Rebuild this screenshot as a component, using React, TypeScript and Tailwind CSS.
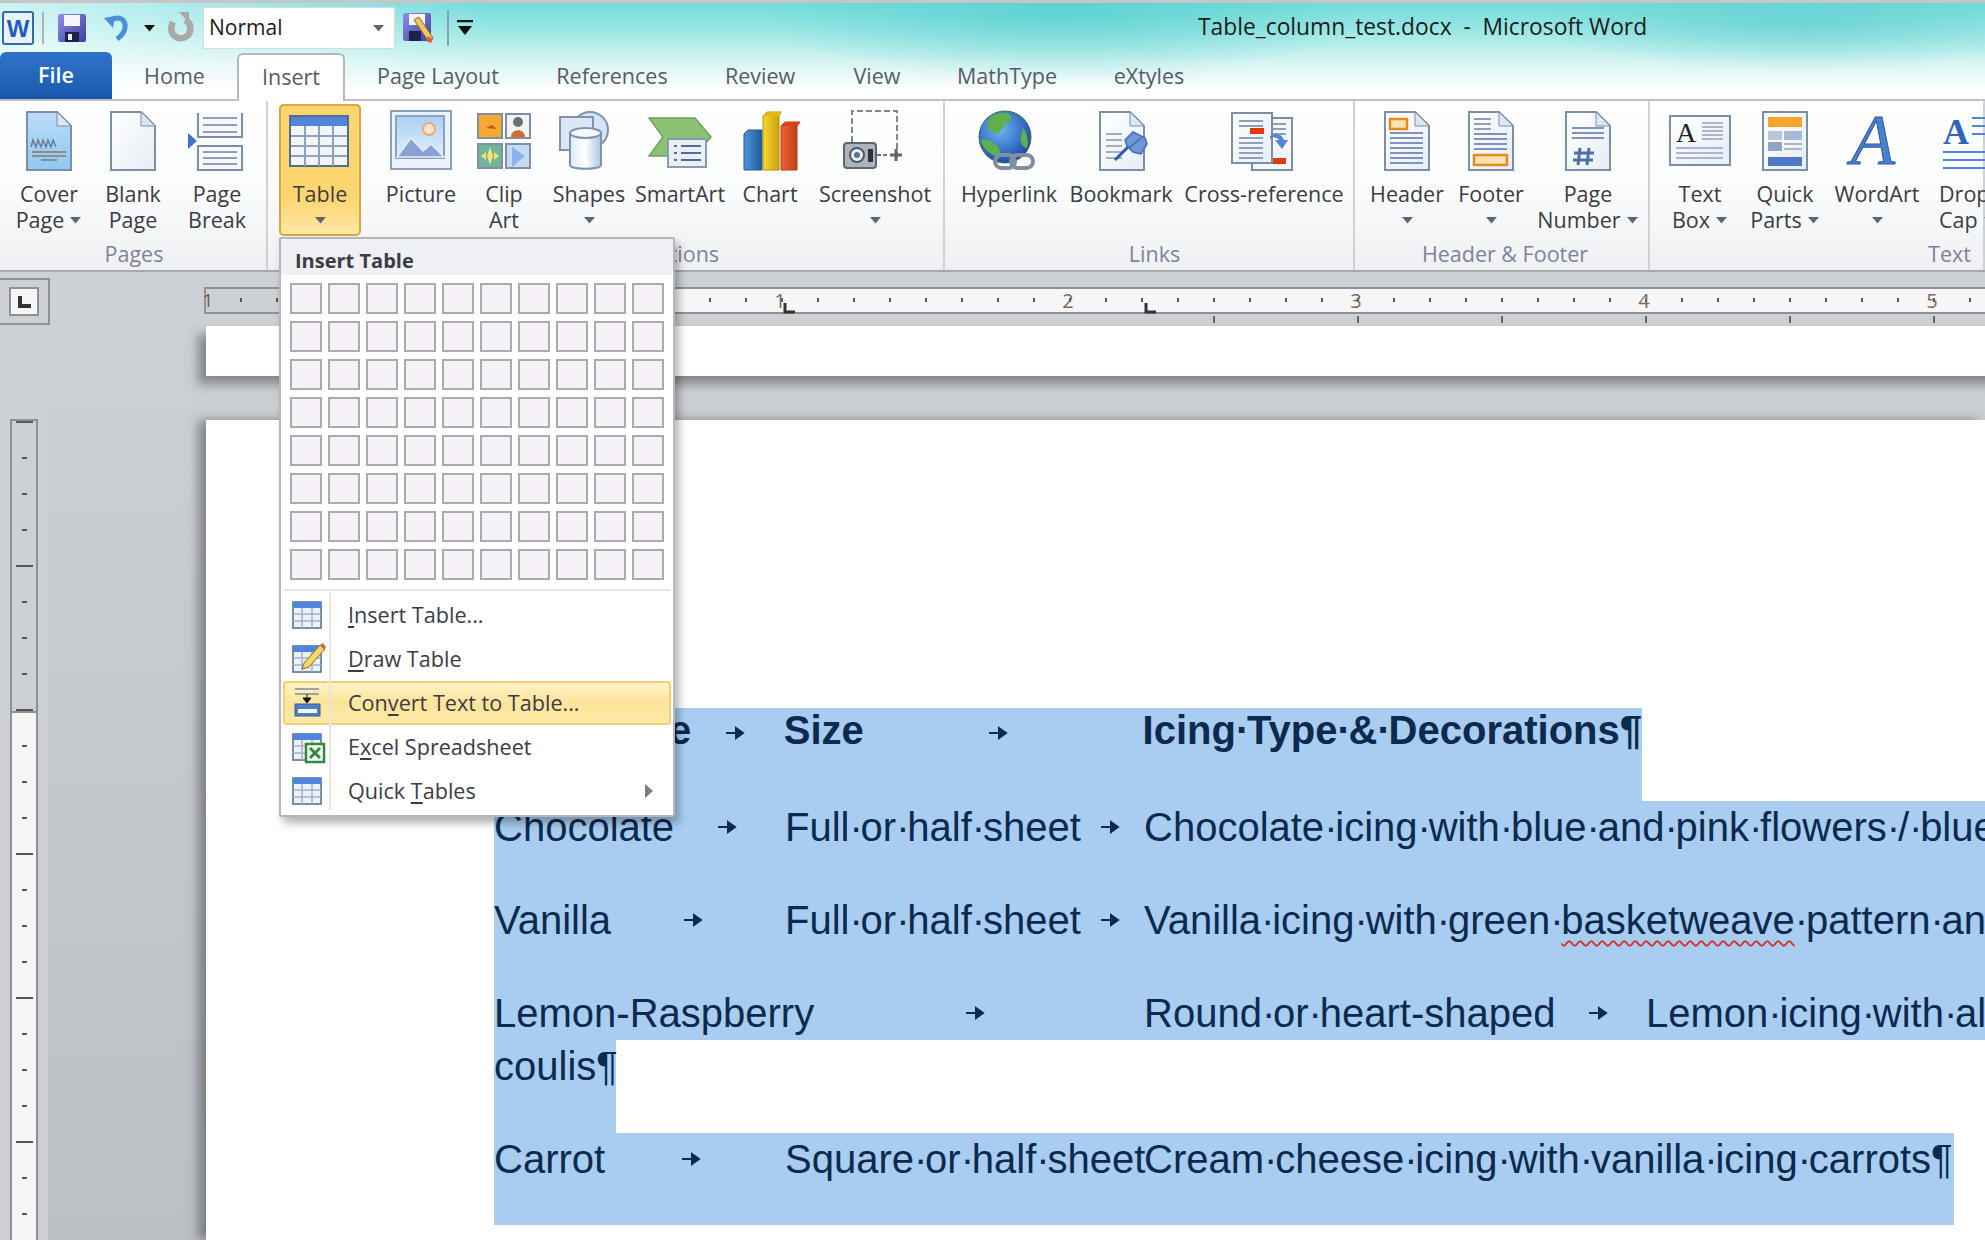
import React from 'react';

const Caret = ({ className = '' }: { className?: string }) => (
  <svg width="13" height="8" viewBox="0 0 13 8" className={`inline-block ${className}`}>
    <path d="M1 1h11L6.5 7.5z" fill="#5f6670" />
  </svg>
);

const Defs = () => (
  <svg className="absolute h-0 w-0">
    <defs>
      <linearGradient id="docW" x1="0" y1="0" x2="1" y2="1">
        <stop offset="0" stopColor="#ffffff" />
        <stop offset="1" stopColor="#e6edf6" />
      </linearGradient>
      <linearGradient id="docB" x1="0" y1="0" x2="0" y2="1">
        <stop offset="0" stopColor="#bcdcf6" />
        <stop offset="1" stopColor="#8fc8f2" />
      </linearGradient>
      <linearGradient id="sky" x1="0" y1="0" x2="0" y2="1">
        <stop offset="0" stopColor="#a9d0f4" />
        <stop offset="1" stopColor="#e4effa" />
      </linearGradient>
      <linearGradient id="cyl" x1="0" y1="0" x2="1" y2="0">
        <stop offset="0" stopColor="#dcebfa" />
        <stop offset="0.5" stopColor="#ffffff" />
        <stop offset="1" stopColor="#a9c6e6" />
      </linearGradient>
      <linearGradient id="save" x1="0" y1="0" x2="1" y2="1">
        <stop offset="0" stopColor="#8f8fe8" />
        <stop offset="1" stopColor="#3c3f9e" />
      </linearGradient>
      <radialGradient id="globe" cx="0.4" cy="0.35" r="0.7">
        <stop offset="0" stopColor="#6fb6f5" />
        <stop offset="1" stopColor="#1547a8" />
      </radialGradient>
      <linearGradient id="barB" x1="0" y1="0" x2="1" y2="0">
        <stop offset="0" stopColor="#4f94d8" />
        <stop offset="1" stopColor="#1f5b9c" />
      </linearGradient>
      <linearGradient id="barY" x1="0" y1="0" x2="1" y2="0">
        <stop offset="0" stopColor="#f8d92e" />
        <stop offset="1" stopColor="#c49a0c" />
      </linearGradient>
      <linearGradient id="barR" x1="0" y1="0" x2="1" y2="0">
        <stop offset="0" stopColor="#ee6236" />
        <stop offset="1" stopColor="#b83a16" />
      </linearGradient>
    </defs>
  </svg>
);

const Doc = ({ fill = 'url(#docW)', x = 10 }: { fill?: string; x?: number }) => (
  <g transform={`translate(${x} 0)`}>
    <path d="M0 4h30l14 14v44H0z" fill={fill} stroke="#7b8fa8" strokeWidth="2" />
    <path d="M30 4v14h14z" fill="#dde6f2" stroke="#7b8fa8" strokeWidth="1" />
  </g>
);

const Lines = ({ x, y, w, n, step = 5, color = '#7e93c0' }: { x: number; y: number; w: number; n: number; step?: number; color?: string }) => (
  <g stroke={color} strokeWidth="2">
    {Array.from({ length: n }).map((_, i) => (
      <path key={i} d={`M${x} ${y + i * step}h${w}`} />
    ))}
  </g>
);

const Icon = ({ children, w = 64 }: { children: React.ReactNode; w?: number }) => (
  <svg width={w} height="64" viewBox={`0 0 ${w} 64`} className="mt-[4px] shrink-0 overflow-visible">
    {children}
  </svg>
);

const TableGlyph = () => (
  <g>
    <rect x="2" y="8" width="58" height="50" fill="#f2f5fa" stroke="#566c90" strokeWidth="2" />
    <rect x="3" y="9" width="56" height="9" fill="#4f86dc" />
    <g stroke="#8fa2bd" strokeWidth="2">
      <path d="M3 28h56M3 38h56M3 48h56M17 18v40M31 18v40M45 18v40" />
    </g>
  </g>
);

const icons: Record<string, React.ReactNode> = {
  cover: (
    <Icon>
      <Doc fill="url(#docB)" />
      <path d="M14 39l2-7 3 7 2-7 3 7 2-7 3 7 2-7 3 7 2-7 3 7" fill="none" stroke="#6b7d92" strokeWidth="1.5" />
      <Lines x={15} y={44} w={34} n={2} step={4} color="#8c8c8c" />
      <path d="M24 52h16" stroke="#8c8c8c" strokeWidth="2" />
    </Icon>
  ),
  blank: (
    <Icon>
      <Doc />
    </Icon>
  ),
  pagebreak: (
    <Icon>
      <path d="M13 5v24h44V5" fill="#f7f9fc" stroke="#7b8fa8" strokeWidth="2" />
      <Lines x={18} y={10} w={34} n={3} step={7} color="#8ea0bd" />
      <rect x="13" y="38" width="44" height="24" fill="#f7f9fc" stroke="#7b8fa8" strokeWidth="2" />
      <Lines x={18} y={44} w={34} n={3} step={6} color="#8ea0bd" />
      <path d="M3 25l9 8-9 8z" fill="#3e72c8" />
    </Icon>
  ),
  table: (
    <Icon>
      <TableGlyph />
    </Icon>
  ),
  picture: (
    <Icon>
      <rect x="2" y="3" width="60" height="58" fill="#eaf3fb" stroke="#8ba0bb" strokeWidth="2" />
      <rect x="7" y="8" width="48" height="42" fill="url(#sky)" stroke="#8ba0bb" strokeWidth="2" />
      <circle cx="40" cy="21" r="6" fill="#fde3cc" stroke="#f3a873" strokeWidth="2" />
      <path d="M8 49l14-19 12 13 8-7 13 13z" fill="#8aa0d6" stroke="#e8eef8" strokeWidth="1.5" />
    </Icon>
  ),
  clipart: (
    <Icon>
      <rect x="6" y="6" width="24" height="24" fill="#f7a92f" stroke="#7f8fa5" strokeWidth="2" />
      <path d="M14 20l6-3 5 4z" fill="#c9541d" />
      <rect x="34" y="6" width="24" height="24" fill="#f2f4f7" stroke="#7f8fa5" strokeWidth="2" />
      <circle cx="46" cy="14" r="5" fill="#6f6f6f" />
      <path d="M39 29c0-9 14-9 14 0z" fill="#d9682a" />
      <rect x="6" y="36" width="24" height="24" fill="#6fb59a" stroke="#7f8fa5" strokeWidth="2" />
      <path d="M18 39l3 9-3 9-3-9zM9 48l5-4v8zM27 48l-5-4v8z" fill="#f5e36e" />
      <rect x="34" y="36" width="24" height="24" fill="#c5daf6" stroke="#7f8fa5" strokeWidth="2" />
      <path d="M40 39l13 9-13 11z" fill="#8ab4ec" />
    </Icon>
  ),
  shapes: (
    <Icon>
      <circle cx="33" cy="22" r="18" fill="#d6e4f6" stroke="#7f93ad" strokeWidth="2" />
      <rect x="3" y="9" width="33" height="33" fill="#dbe7f7" stroke="#7f93ad" strokeWidth="2" />
      <path d="M13 25v32c0 5 31 5 31 0V25z" fill="url(#cyl)" stroke="#7f93ad" strokeWidth="2" />
      <ellipse cx="28.5" cy="25" rx="15.5" ry="5" fill="#f4f8fd" stroke="#7f93ad" strokeWidth="2" />
    </Icon>
  ),
  smartart: (
    <Icon>
      <path d="M1 10h46l16 19-16 19H1l14-19z" fill="#8dc274" stroke="#6ea45a" strokeWidth="1.5" />
      <rect x="20" y="31" width="38" height="28" fill="#e9eff5" stroke="#8a9bb0" strokeWidth="2" />
      <path d="M26 38h3M33 38h20M26 45h3M33 45h20M26 52h3M33 52h20" stroke="#4f6b9a" strokeWidth="2" />
    </Icon>
  ),
  chart: (
    <Icon>
      <path d="M6 26l4-4h14v40H6z" fill="url(#barB)" stroke="#1f5b9c" />
      <path d="M25 8l4-4h14l-2 4v54H25z" fill="url(#barY)" stroke="#b58d0a" />
      <path d="M25 8l4-4h14l-2 4z" fill="#e3b90f" />
      <path d="M43 18l4-4h15l-3 4v44H43z" fill="url(#barR)" stroke="#b23a18" />
      <path d="M43 18l4-4h15l-3 4z" fill="#d8431c" />
    </Icon>
  ),
  screenshot: (
    <Icon>
      <path d="M9 34V3h45v48" fill="none" stroke="#7c8694" strokeWidth="2" strokeDasharray="6 3" />
      <rect x="1" y="35" width="32" height="25" rx="3" fill="#aeb4bb" stroke="#5e6670" strokeWidth="2" />
      <circle cx="14" cy="47" r="7" fill="#e8edf2" stroke="#4f5863" strokeWidth="2" />
      <circle cx="14" cy="47" r="3" fill="#4f76a8" />
      <rect x="25" y="41" width="5" height="13" fill="#2d3238" />
      <path d="M34 47h10" stroke="#6b7480" strokeWidth="2" strokeDasharray="4 2" />
      <path d="M47 47h12M53 41v12" stroke="#5e6670" strokeWidth="3" />
    </Icon>
  ),
  hyperlink: (
    <Icon>
      <circle cx="28" cy="29" r="26" fill="url(#globe)" stroke="#3b6a4d" strokeWidth="1" />
      <path d="M14 9c8-6 18-5 20 0s-6 6-8 10-6 8-10 6-8-10-2-16zM4 32c6-2 12 2 16 6s4 10 0 10-14-6-16-16zM46 20c4 4 6 14 4 20-4 0-8-6-6-12z" fill="#5fb04a" />
      <g fill="none" stroke="#7f8ea0" strokeWidth="4">
        <rect x="18" y="47" width="20" height="13" rx="6.5" fill="none" />
        <rect x="34" y="47" width="22" height="13" rx="6.5" fill="none" />
      </g>
    </Icon>
  ),
  bookmark: (
    <Icon>
      <Doc x={11} />
      <Lines x={17} y={26} w={16} n={5} step={6} color="#a5aebb" />
      <path d="M26 52l14-14" stroke="#2b5aa8" strokeWidth="3" />
      <path d="M36 32l8-8 12 6 2 6-6 10-8-2-6-6z" fill="#6f97d6" stroke="#3e6db5" strokeWidth="1.5" />
      <path d="M40 40l12-10" stroke="#3e6db5" strokeWidth="1.5" />
    </Icon>
  ),
  crossref: (
    <Icon>
      <rect x="20" y="10" width="40" height="52" fill="#f4f7fb" stroke="#7b8fa8" strokeWidth="2" />
      <Lines x={40} y={16} w={14} n={3} step={5} color="#8ea0bd" />
      <rect x="40" y="50" width="14" height="6" fill="#e03a0d" />
      <rect x="0" y="5" width="40" height="50" fill="url(#docW)" stroke="#7b8fa8" strokeWidth="2" />
      <Lines x={7} y={13} w={24} n={2} step={5} color="#8ea0bd" />
      <rect x="18" y="20" width="14" height="6" fill="#e03a0d" />
      <Lines x={7} y={30} w={24} n={5} step={5} color="#8ea0bd" />
      <path d="M38 28c6-4 12-2 14 4l4 0-6 9-7-9h4c-2-3-6-3-9-1z" fill="#4f86dc" />
    </Icon>
  ),
  header: (
    <Icon>
      <Doc />
      <rect x="15" y="11" width="17" height="10" fill="#fbe2b0" stroke="#e58a1f" strokeWidth="2.5" />
      <Lines x={15} y={25} w={33} n={7} step={5} />
    </Icon>
  ),
  footer: (
    <Icon>
      <Doc />
      <Lines x={15} y={11} w={17} n={3} step={5} color="#8ea0bd" />
      <Lines x={15} y={26} w={33} n={4} step={5} />
      <rect x="15" y="47" width="33" height="10" fill="#fbe2b0" stroke="#e58a1f" strokeWidth="2.5" />
    </Icon>
  ),
  pagenumber: (
    <Icon>
      <Doc />
      <Lines x={16} y={20} w={32} n={3} step={5} />
      <path d="M24 40l-2 17M33 40l-2 17M18 45h20M17 52h20" stroke="#4f6fa8" strokeWidth="3" fill="none" />
    </Icon>
  ),
  textbox: (
    <Icon>
      <rect x="2" y="8" width="60" height="49" fill="url(#docW)" stroke="#7b8fa8" strokeWidth="2" />
      <text x="8" y="34" fontFamily="'Liberation Serif', serif" fontSize="28" fill="#222">A</text>
      <Lines x={34} y={15} w={21} n={5} step={4} color="#aab6cc" />
      <Lines x={8} y={40} w={47} n={3} step={5} color="#aab6cc" />
    </Icon>
  ),
  quickparts: (
    <Icon>
      <rect x="10" y="4" width="44" height="58" fill="url(#docW)" stroke="#7b8fa8" strokeWidth="2" />
      <rect x="15" y="9" width="34" height="10" fill="#f8a52c" />
      <rect x="15" y="23" width="14" height="9" fill="#b9c6da" />
      <rect x="31" y="23" width="18" height="9" fill="#a8b9d8" />
      <rect x="15" y="34" width="14" height="9" fill="#8fa4c4" />
      <Lines x={31} y={36} w={18} n={2} step={5} color="#aab6cc" />
      <rect x="15" y="49" width="34" height="9" fill="#4f78c8" />
    </Icon>
  ),
  wordart: (
    <Icon>
      <text x="6" y="56" fontFamily="'Liberation Serif', serif" fontStyle="italic" fontSize="72" fill="#4a7fd0" stroke="#2b5aa8" strokeWidth="1">A</text>
    </Icon>
  ),
  dropcap: (
    <Icon>
      <text x="4" y="36" fontFamily="'Liberation Serif', serif" fontWeight="700" fontSize="36" fill="#2f63bd">A</text>
      <Lines x={33} y={10} w={31} n={3} step={8} color="#4f86dc" />
      <Lines x={4} y={44} w={60} n={3} step={8} color="#4f86dc" />
    </Icon>
  ),
};

const RibbonButton = ({
  icon,
  top,
  bottom = '',
  caret = false,
  className = '',
}: {
  icon: string;
  top: string;
  bottom?: string;
  caret?: boolean;
  className?: string;
}) => (
  <div className={`flex h-[132px] shrink-0 flex-col items-center ${className}`}>
    {icons[icon]}
    <div className="mt-[9px] h-[26px] whitespace-nowrap leading-[26px]">{top}</div>
    <div className="flex h-[26px] items-center gap-[5px] whitespace-nowrap leading-[26px]">
      {bottom}
      {caret && <Caret />}
    </div>
  </div>
);

const Group = ({
  label,
  children,
  className = '',
  labelClass = '',
}: {
  label: string;
  children: React.ReactNode;
  className?: string;
  labelClass?: string;
}) => (
  <div className={`flex h-full shrink-0 flex-col border-r-2 border-[#ced1d6] pt-[3px] ${className}`}>
    <div className="flex h-[132px]">{children}</div>
    <div className={`mt-[4px] h-[28px] whitespace-nowrap text-center leading-[28px] text-[#7f829c] ${labelClass}`}>{label}</div>
  </div>
);

const Underlined = ({ c }: { c: string }) => <span className="underline underline-offset-[3px]">{c}</span>;

const MenuItem = ({
  children,
  icon,
  active = false,
  arrow = false,
}: {
  children: React.ReactNode;
  icon: React.ReactNode;
  active?: boolean;
  arrow?: boolean;
}) => (
  <div
    className={`flex h-[44px] items-center rounded-[4px] ${
      active ? 'border-2 border-[#f3cf6f] bg-[linear-gradient(#fff3c8,#fde49a_50%,#fdeaa8)]' : 'border-2 border-transparent'
    }`}
  >
    <svg width="40" height="36" viewBox="0 0 40 36" className="ml-[1px] shrink-0">
      {icon}
    </svg>
    <div className="ml-[22px] flex-1 whitespace-nowrap">{children}</div>
    {arrow && (
      <svg width="8" height="14" viewBox="0 0 8 14" className="mr-[16px]">
        <path d="M0 0l8 7-8 7z" fill="#7d7d7d" />
      </svg>
    )}
  </div>
);

const MiniTable = () => (
  <g>
    <rect x="7" y="5" width="28" height="26" fill="#eef2f8" stroke="#4f6a90" strokeWidth="1.5" />
    <rect x="7" y="5" width="28" height="6" fill="#4f86dc" />
    <path d="M7 17h28M7 24h28M16 11v20M26 11v20" stroke="#a3b3ca" strokeWidth="1.5" />
  </g>
);

const InsertTableMenu = () => (
  <div className="absolute left-[279px] top-[237px] z-20 h-[580px] w-[396px] rounded-[2px] border-2 border-[#b4b7bb] bg-white text-[21.6px] text-[#3c3c46] shadow-[4px_6px_8px_rgba(0,0,0,0.3)]">
    <div className="h-[36px] bg-[#eef0f3] pl-[14px] text-[20px] font-bold leading-[43px]">Insert Table</div>
    <div className="mt-[8px] grid grid-cols-[repeat(10,32px)] gap-x-[6px] gap-y-[7px] pl-[9px]">
      {Array.from({ length: 80 }).map((_, i) => (
        <div key={i} className="h-[31px] border-2 border-[#a9abaf] bg-[#f6f2f7]" />
      ))}
    </div>
    <div className="mx-[3px] mt-[9px] h-[2px] bg-[#e4e6e9]" />
    <div className="relative px-[2px] pt-[2px]">
      <div className="absolute bottom-[3px] left-[48px] top-[1px] w-[2px] bg-[#e4e6e9]" />
      <MenuItem icon={<MiniTable />}>
        <Underlined c="I" />nsert Table...
      </MenuItem>
      <MenuItem
        icon={
          <g>
            <MiniTable />
            <path d="M18 22l16-18 5 4-16 18-7 2z" fill="#f6d66c" stroke="#8a6d1e" strokeWidth="1" />
            <path d="M34 4l3-2 3 4-2 3z" fill="#d9614a" />
          </g>
        }
      >
        <Underlined c="D" />raw Table
      </MenuItem>
      <MenuItem
        active
        icon={
          <g>
            <path d="M9 4h24M9 9h24" stroke="#7d8ca3" strokeWidth="1.5" />
            <path d="M21 9v7M17 13l4 5 4-5z" stroke="#111" fill="#111" strokeWidth="1" />
            <rect x="9" y="19" width="25" height="12" fill="#4f7fc4" stroke="#3f5f90" />
            <rect x="12" y="24" width="19" height="4" fill="#f5f6f8" />
          </g>
        }
      >
        Con<Underlined c="v" />ert Text to Table...
      </MenuItem>
      <MenuItem
        icon={
          <g>
            <MiniTable />
            <rect x="20" y="15" width="18" height="18" fill="#fff" stroke="#2e8b3c" strokeWidth="2.5" />
            <path d="M24 19l10 10M34 19L24 29" stroke="#2e8b3c" strokeWidth="3" />
          </g>
        }
      >
        E<Underlined c="x" />cel Spreadsheet
      </MenuItem>
      <MenuItem icon={<MiniTable />} arrow>
        Quick <Underlined c="T" />ables
      </MenuItem>
    </div>
  </div>
);

const HorizontalRuler = () => {
  const minors = [240, 276];
  const white: number[] = [];
  for (let x = 673; x < 1985; x += 36) {
    if ((x - 492) % 288 !== 0) white.push(x);
  }
  return (
    <svg width="1781" height="56" viewBox="204 270 1781 56" className="shrink-0">
      <rect x="205" y="288" width="288" height="25" fill="#cdd0d4" stroke="#8d9298" strokeWidth="2" />
      <rect x="493" y="288" width="1500" height="25" fill="#f6f6f6" stroke="#8d9298" strokeWidth="2" />
      <text x="208" y="307" fontSize="19" textAnchor="middle" fill="#6d5a4a" fontFamily="'Open Sans', sans-serif">1</text>
      {minors.map((x) => (
        <rect key={x} x={x} y="298" width="2" height="4" fill="#555" />
      ))}
      {white.map((x) => {
        const major = (x - 492) % 144 === 0;
        return <rect key={x} x={x} y={major ? 294 : 298} width="2" height={major ? 12 : 4} fill="#555" />;
      })}
      {[1, 2, 3, 4, 5].map((n) => (
        <text key={n} x={492 + n * 288} y="308" fontSize="20" textAnchor="middle" fill="#7d6a5c" fontFamily="'Open Sans', sans-serif">
          {n}
        </text>
      ))}
      {[785, 1146].map((x) => (
        <path key={x} d={`M${x} 303v9h10`} fill="none" stroke="#333" strokeWidth="3" />
      ))}
      {[1213, 1357, 1501, 1645, 1789, 1933].map((x) => (
        <rect key={x} x={x} y="316" width="2" height="7" fill="#666" />
      ))}
    </svg>
  );
};

const VerticalRuler = () => {
  const ticks: number[] = [];
  for (let y = 421; y < 1240; y += 36) ticks.push(y);
  return (
    <svg width="206" height="914" viewBox="0 326 206 914" className="shrink-0">
      <rect x="0" y="326" width="48" height="914" fill="#cdd0d4" />
      <rect x="11" y="420" width="26" height="292" fill="#cdd0d4" stroke="#8d9298" strokeWidth="2" />
      <rect x="11" y="712" width="26" height="540" fill="#f6f6f6" stroke="#8d9298" strokeWidth="2" />
      {ticks.map((y) => {
        const major = (y - 421) % 144 === 0;
        return <rect key={y} x={major ? 16 : 22} y={y} width={major ? 17 : 5} height="2" fill="#555" />;
      })}
    </svg>
  );
};

const TabMark = ({ className = '' }: { className?: string }) => (
  <svg width="20" height="14" viewBox="0 0 20 14" className={`shrink-0 ${className}`}>
    <path d="M1 7h13M11 2L18 7l-7 5z" stroke="#0b2a4e" strokeWidth="2" fill="#0b2a4e" />
  </svg>
);

// word's formatting dot sits in a space, which is narrower than the glyph
const Dotted = ({ s }: { s: string }) => (
  <>
    {s.split('·').map((part, i) => (
      <React.Fragment key={i}>
        {i > 0 && <span className="tracking-[-0.055em]">·</span>}
        {part}
      </React.Fragment>
    ))}
  </>
);

export default function App() {
  return (
    <div className="relative flex h-[1240px] w-[1985px] flex-col overflow-hidden bg-[#cdd0d4] font-['Open_Sans',sans-serif] text-[21.5px] text-[#3c3c46]">
      <Defs />

      {/* window chrome */}
      <div className="h-[99px] shrink-0 border-t-[3px] border-[#c6c6c6] bg-[radial-gradient(ellipse_300px_70px_at_1060px_10px,rgba(70,200,200,0.55),transparent),radial-gradient(ellipse_260px_50px_at_1800px_20px,rgba(70,195,195,0.45),transparent),linear-gradient(90deg,rgba(255,255,255,0.65),rgba(255,255,255,0)_25%),linear-gradient(#72dcdc,#9ce8e5_30%,#d8f5f3_62%,#ffffff_92%)]">
        <div className="flex h-[49px] items-center">
          <div className="flex w-[1198px] shrink-0 items-center">
            <svg width="32" height="34" viewBox="0 0 32 34" className="ml-[2px] shrink-0">
              <rect x="1" y="1" width="30" height="32" rx="2" fill="#e9f3fc" stroke="#2f6ab5" strokeWidth="2" />
              <text x="16" y="26" textAnchor="middle" fontSize="24" fontWeight="700" fill="#1b5fbf" fontFamily="'Liberation Sans', sans-serif">W</text>
            </svg>
            <div className="ml-[8px] h-[32px] w-[2px] bg-[#a9b4b8]" />
            <svg width="30" height="30" viewBox="0 0 30 30" className="ml-[13px] shrink-0">
              <rect x="1" y="1" width="28" height="28" rx="2" fill="url(#save)" />
              <rect x="7" y="2" width="16" height="11" fill="#f5f5fb" />
              <rect x="8" y="19" width="14" height="10" fill="#1f2050" />
              <rect x="11" y="21" width="4" height="6" fill="#f0f0f0" />
            </svg>
            <svg width="30" height="32" viewBox="0 0 30 32" className="ml-[15px] shrink-0">
              <path d="M9 8c9-5 15 0 14 8-1 6-5 9-8 11" fill="none" stroke="#4a8fd8" strokeWidth="5" />
              <path d="M2 6l11-2-2 12z" fill="#4a8fd8" />
            </svg>
            <Caret className="ml-[11px] [&>path]:fill-[#111]" />
            <svg width="28" height="32" viewBox="0 0 28 32" className="ml-[11px] shrink-0">
              <path d="M6 10c-3 6-2 12 3 15 6 3 13 0 14-6 1-5-1-9-5-11" fill="none" stroke="#a8aaa8" strokeWidth="6.5" />
              <path d="M12 0h10v11z" fill="#a8aaa8" />
            </svg>
            <div className="ml-[8px] flex h-[42px] w-[192px] items-center justify-between border border-[#d5dddf] bg-white pl-[5px] pr-[9px] text-[21px] text-[#1c1c1c]">
              Normal
              <Caret />
            </div>
            <svg width="32" height="32" viewBox="0 0 32 32" className="ml-[7px] shrink-0">
              <rect x="1" y="1" width="28" height="28" rx="2" fill="url(#save)" />
              <rect x="7" y="2" width="16" height="11" fill="#f5f5fb" />
              <rect x="7" y="19" width="12" height="10" fill="#1f2050" />
              <path d="M12 8l5-3 14 21-4 4z" fill="#eec85e" stroke="#8a6d1e" />
              <path d="M26 24l5 3-2 4-5-2z" fill="#d9614a" />
            </svg>
            <div className="ml-[13px] h-[36px] w-[2px] bg-[#87a3a6]" />
            <svg width="18" height="16" viewBox="0 0 18 16" className="ml-[7px] shrink-0">
              <path d="M1 1h16" stroke="#111" strokeWidth="2.5" />
              <path d="M2 6h14l-7 9z" fill="#111" />
            </svg>
          </div>
          <div className="whitespace-nowrap text-[22.8px] text-[#1c1c1c]">Table_column_test.docx&nbsp; -&nbsp; Microsoft Word</div>
        </div>

        <div className="flex h-[47px] items-end text-center leading-[46px] text-[#575c66]">
          <div className="h-[47px] w-[112px] rounded-t-[6px] bg-[linear-gradient(#2f74c9,#1a58ac)] font-semibold text-white">File</div>
          <div className="w-[125px]">Home</div>
          <div className="z-10 -mb-[2px] h-[48px] w-[108px] rounded-t-[6px] border-2 border-b-0 border-[#b5b8bc] bg-white leading-[44px]">Insert</div>
          <div className="w-[186px]">Page Layout</div>
          <div className="w-[162px]">References</div>
          <div className="w-[134px]">Review</div>
          <div className="w-[100px]">View</div>
          <div className="w-[160px]">MathType</div>
          <div className="w-[124px]">eXtyles</div>
        </div>
      </div>

      {/* ribbon */}
      <div className="flex h-[171px] shrink-0 overflow-hidden border-t-2 border-[#bcbfc3] bg-[linear-gradient(#ffffff,#fafbfb_55%,#eef0f3)] text-[#3c3c46]">
        <Group label="Pages" labelClass="pr-[5px]" className="w-[268px] pl-[7px]">
          <RibbonButton icon="cover" top="Cover" bottom="Page" caret className="w-[84px]" />
          <RibbonButton icon="blank" top="Blank" bottom="Page" className="w-[84px]" />
          <RibbonButton icon="pagebreak" top="Page" bottom="Break" className="w-[84px]" />
        </Group>
        <Group label="Illustrations" labelClass="pl-[98px]" className="w-[677px] pl-[11px]">
          <RibbonButton icon="table" top="Table" caret className="w-[82px] rounded-[5px] bg-[linear-gradient(#fdd56f,#fdd56f_70%,#fee9a6)] shadow-[inset_0_0_0_2px_#d9a63f]" />
          <RibbonButton icon="picture" top="Picture" className="ml-[17px] w-[86px]" />
          <RibbonButton icon="clipart" top="Clip" bottom="Art" className="ml-[10px] w-[60px]" />
          <RibbonButton icon="shapes" top="Shapes" caret className="ml-[15px] w-[80px]" />
          <RibbonButton icon="smartart" top="SmartArt" className="ml-[6px] w-[90px]" />
          <RibbonButton icon="chart" top="Chart" className="ml-[10px] w-[70px]" />
          <RibbonButton icon="screenshot" top="Screenshot" caret className="ml-[8px] w-[124px]" />
        </Group>
        <Group label="Links" className="w-[410px] pl-[11px]">
          <RibbonButton icon="hyperlink" top="Hyperlink" className="ml-[-5px] w-[116px]" />
          <RibbonButton icon="bookmark" top="Bookmark" className="ml-[2px] w-[104px]" />
          <RibbonButton icon="crossref" top="Cross-reference" className="ml-[3px] w-[176px]" />
        </Group>
        <Group label="Header & Footer" labelClass="pr-[3px]" className="w-[295px] pl-[10px]">
          <RibbonButton icon="header" top="Header" caret className="w-[84px]" />
          <RibbonButton icon="footer" top="Footer" caret className="w-[84px]" />
          <RibbonButton icon="pagenumber" top="Page" bottom="Number" caret className="ml-[4px] w-[102px]" />
        </Group>
        <Group label="Text" labelClass="pl-[252px]" className="w-[335px] border-r-0 pl-[14px]">
          <RibbonButton icon="textbox" top="Text" bottom="Box" caret className="w-[72px]" />
          <RibbonButton icon="quickparts" top="Quick" bottom="Parts" caret className="ml-[7px] w-[84px]" />
          <RibbonButton icon="wordart" top="WordArt" caret className="ml-[5px] w-[90px]" />
          <RibbonButton icon="dropcap" top="Drop" bottom="Cap" caret className="ml-[7px] w-[64px] items-start pl-[10px]" />
        </Group>
      </div>

      <InsertTableMenu />

      {/* ruler band */}
      <div className="flex h-[56px] shrink-0 border-t-2 border-[#a5a9ae] bg-[#cdd0d4]">
        <div className="mt-[6px] h-[47px] w-[50px] shrink-0 border-2 border-l-0 border-[#8d9298] pl-[9px] pt-[7px]">
          <div className="flex h-[29px] w-[30px] items-end justify-center border-2 border-[#8d9298] bg-[#f6f6f6] pb-[5px]">
            <svg width="14" height="14" viewBox="0 0 14 14">
              <path d="M3 1v10h11" fill="none" stroke="#333" strokeWidth="4" />
            </svg>
          </div>
        </div>
        <div className="ml-[154px] -mt-[2px]">
          <HorizontalRuler />
        </div>
      </div>

      {/* document */}
      <div className="flex min-h-0 flex-1 bg-[linear-gradient(#cdd0d4,#bcbfc4)]">
        <VerticalRuler />
        <div className="flex min-w-0 flex-1 flex-col">
          <div className="-mr-[20px] h-[50px] shrink-0 bg-white shadow-[-8px_8px_10px_rgba(60,64,70,0.5)]" />
          <div className="mt-[44px] flex-1 overflow-hidden bg-white pl-[288px] pt-[288px] font-['Liberation_Sans',sans-serif] text-[40px] leading-[52px] text-[#0b2a4e] shadow-[-8px_0_10px_rgba(60,64,70,0.5)]">
            <div className="flex h-[93px] w-[1148px] items-start whitespace-nowrap bg-[#a8cdf0] font-bold leading-[44px]">
              <span className="w-[232px]"><Dotted s="Cake·Type" /></span>
              <TabMark className="mr-[39px] mt-[18px]" />
              <span className="w-[205px]">Size</span>
              <TabMark className="mr-[135px] mt-[18px]" />
              <span><Dotted s="Icing·Type·&·Decorations¶" /></span>
            </div>
            <div className="flex h-[93px] items-start overflow-hidden whitespace-nowrap bg-[#a8cdf0]">
              <span className="w-[223px] shrink-0">Chocolate</span>
              <TabMark className="mr-[48px] mt-[19px]" />
              <span className="w-[315px] shrink-0"><Dotted s="Full·or·half·sheet" /></span>
              <TabMark className="mr-[24px] mt-[19px]" />
              <span><Dotted s="Chocolate·icing·with·blue·and·pink·flowers·/·blue·and" /></span>
            </div>
            <div className="flex h-[93px] items-start overflow-hidden whitespace-nowrap bg-[#a8cdf0]">
              <span className="w-[189px] shrink-0">Vanilla</span>
              <TabMark className="mr-[82px] mt-[19px]" />
              <span className="w-[315px] shrink-0"><Dotted s="Full·or·half·sheet" /></span>
              <TabMark className="mr-[24px] mt-[19px]" />
              <span>
                <Dotted s="Vanilla·icing·with·green·" />
                <span className="underline decoration-[#d0342c] decoration-wavy decoration-2 underline-offset-[6px]">basketweave</span>
                <Dotted s="·pattern·and" />
              </span>
            </div>
            <div className="flex h-[53px] items-start overflow-hidden whitespace-nowrap bg-[#a8cdf0]">
              <span className="w-[471px] shrink-0">Lemon-Raspberry</span>
              <TabMark className="mr-[159px] mt-[19px]" />
              <span className="w-[444px] shrink-0"><Dotted s="Round·or·heart-shaped" /></span>
              <TabMark className="mr-[38px] mt-[19px]" />
              <span><Dotted s="Lemon·icing·with·almond" /></span>
            </div>
            <div className="h-[93px] w-[122px] whitespace-nowrap bg-[#a8cdf0]">coulis¶</div>
            <div className="flex h-[92px] w-[1460px] items-start whitespace-nowrap bg-[#a8cdf0]">
              <span className="w-[187px] shrink-0">Carrot</span>
              <TabMark className="mr-[84px] mt-[19px]" />
              <span className="w-[359px] shrink-0"><Dotted s="Square·or·half·sheet" /></span>
              <span><Dotted s="Cream·cheese·icing·with·vanilla·icing·carrots¶" /></span>
            </div>
          </div>
        </div>
      </div>
    </div>
  );
}
